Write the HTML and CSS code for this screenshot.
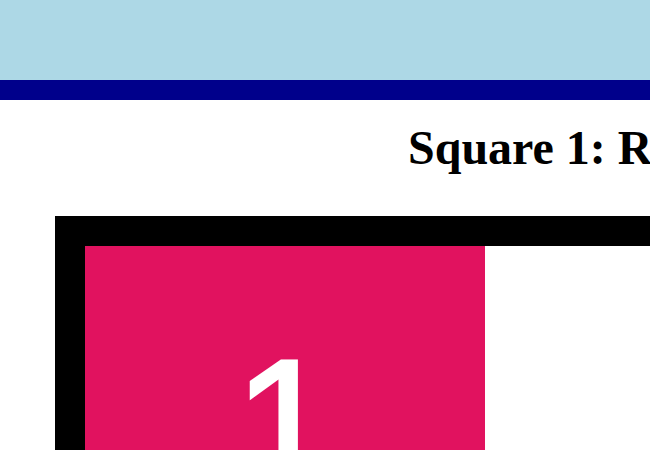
FILE: index.html
```html
<!DOCTYPE html>
<html lang="en">
<head>
<meta charset="utf-8">
<title>Square 1</title>
<link rel="stylesheet" href="styles.css">
</head>
<body>
<header class="topbar"></header>
<main class="page">
  <h1 class="title">Square 1: Rotate</h1>
  <section class="frame">
    <div class="square">
      <span class="digit">1</span>
    </div>
  </section>
</main>
</body>
</html>
```
FILE: styles.css
```css
html, body {
  margin: 0;
  padding: 0;
  overflow: hidden;
  background: #ffffff;
}

body {
  width: 1400px;
  font-family: "Liberation Serif", "Times New Roman", serif;
}

.topbar {
  height: 80px;
  background: #add8e6;
  border-bottom: 20px solid #00008b;
}

.title {
  margin: 20px 0 41px;
  padding-left: 408px;
  font-size: 48px;
  font-weight: bold;
  line-height: 1.15;
  white-space: nowrap;
  color: #000000;
}

.frame {
  margin-left: 55px;
  width: 1200px;
  height: 500px;
  border: 30px solid #000000;
  border-right: none;
  display: flex;
}

.square {
  width: 400px;
  height: 400px;
  background: #e1125f;
  display: flex;
  justify-content: center;
  align-items: flex-start;
  padding-top: 87px;
  box-sizing: border-box;
}

.digit {
  font-family: "Liberation Sans", Arial, sans-serif;
  font-weight: normal;
  font-size: 185px;
  line-height: 1;
  color: #ffffff;
  -webkit-text-stroke: 3px #ffffff;
}
```
